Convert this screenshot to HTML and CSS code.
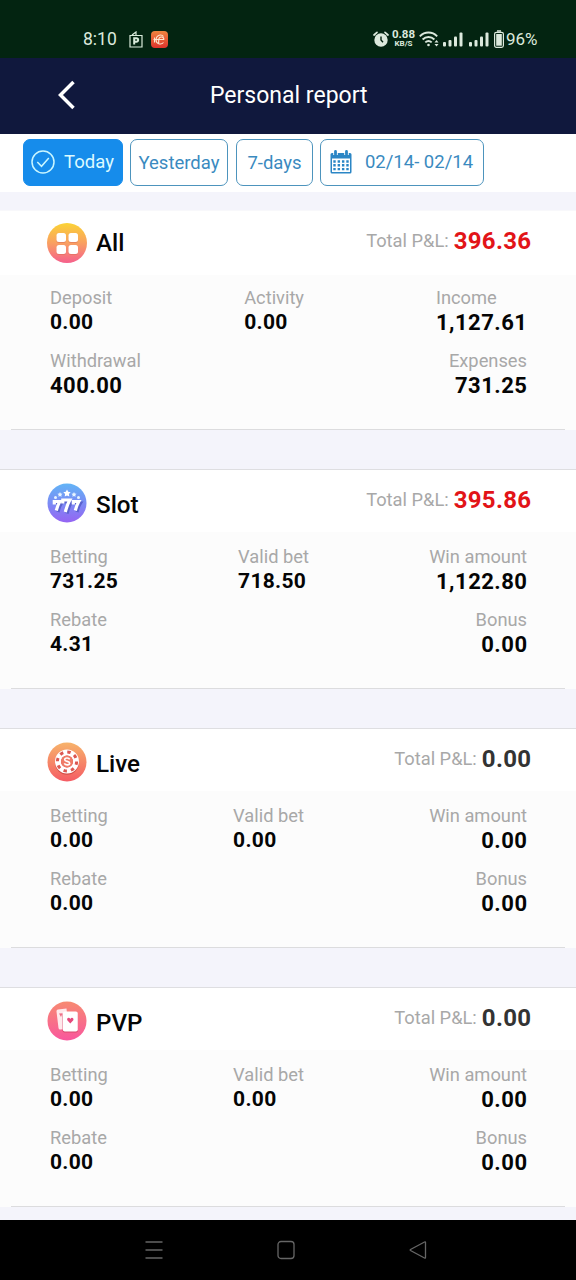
FILE: index.html
```html
<!DOCTYPE html>
<html lang="en">
<head>
<meta charset="utf-8">
<title>Personal report</title>
<link rel="stylesheet" href="styles.css">
</head>
<body>
<div class="status">
  <div class="status-left">
    <span class="clock">8:10</span>
    <svg class="ico-p" width="14" height="17" viewBox="0 0 14 17" fill="none" stroke="#d9eadb" stroke-width="1.2"><path d="M1 4.500h12v11.500H1zM3 4l4-3v3"/><path d="M5.200 13.500V7.200h2.200a1.700 1.700 0 0 1 0 3.500H5.500" stroke-width="2"/></svg>
    <svg width="17" height="17" viewBox="0 0 17 17"><defs><linearGradient id="app" x2="0" y2="1"><stop stop-color="#f0853f"/><stop offset="1" stop-color="#e0322c"/></linearGradient></defs><rect width="17" height="17" rx="4" fill="url(#app)"/><path d="M12.500 5.500C10.500 2.800 5.500 4 5 8.500c-.2 4.500 5 5.700 7.500 3M2.500 8.500h10.300c.5-3-4.600-3.500-5.100 0V12M3.500 6.500v5" fill="none" stroke="#ffe6cf" stroke-width="1.100"/></svg>
  </div>
  <div class="status-right">
    <svg width="16" height="17" viewBox="0 0 16 17"><circle cx="8" cy="9" r="6.700" fill="#dce9dd"/><path d="M1 4l3-2.700M15 4l-3-2.700" stroke="#dce9dd" stroke-width="1.700" stroke-linecap="round"/><path d="M8 5.500V9l2 2.200" stroke="#03200f" stroke-width="1.400" fill="none"/></svg>
    <div class="speed"><span class="speed-num">0.88</span><span class="speed-unit">KB/S</span></div>
    <svg class="wifi" width="20" height="16" viewBox="0 0 20 16" fill="none" stroke="#dce9dd" stroke-width="1.900"><path d="M.8 5.300c5-5 12.400-5 17.400 0M3.600 8.500c3.400-3.400 8.400-3.400 11.800 0M6.300 11.400c2-1.900 4.400-1.900 6.400 0"/><circle cx="9.500" cy="14" r="1.300" fill="#dce9dd" stroke="none"/><path d="M15.500 11.500l2-2.500 2 2.500zM15.500 13l2 2.500 2-2.500z" fill="#dce9dd" stroke="none"/></svg>
    <svg class="bars" width="20" height="15" viewBox="0 0 20 15" fill="#dce9dd"><rect y="10" width="3" height="4.500" rx="1"/><rect x="5.500" y="8" width="3" height="6.500" rx="1"/><rect x="11" y="4.500" width="3" height="10" rx="1"/><rect x="16.500" y=".5" width="3" height="14" rx="1"/></svg>
    <svg class="bars" width="20" height="15" viewBox="0 0 20 15" fill="#dce9dd"><rect y="10" width="3" height="4.500" rx="1"/><rect x="5.500" y="8" width="3" height="6.500" rx="1"/><rect x="11" y="4.500" width="3" height="10" rx="1"/><rect x="16.500" y=".5" width="3" height="14" rx="1"/></svg>
    <svg class="battery" width="10" height="18" viewBox="0 0 10 18"><path d="M3 1h4" stroke="#dce9dd" stroke-width="1.500"/><rect x=".6" y="2.300" width="8.800" height="15" rx="1.800" fill="none" stroke="#dce9dd" stroke-width="1.200"/><rect x="2.200" y="4" width="5.600" height="11.700" fill="#dce9dd"/></svg>
    <span class="percent">96%</span>
  </div>
</div>

<header class="header">
  <svg class="back" width="20" height="32" viewBox="0 0 20 32"><path d="M16.500 3L3.500 16l13 13" fill="none" stroke="#fff" stroke-width="3.500"/></svg>
  <h1 class="title">Personal report</h1>
</header>

<nav class="filters">
  <button class="chip chip-today"><svg width="24" height="24" viewBox="0 0 24 24" fill="none" stroke="#c9f6ff" stroke-width="1.500"><circle cx="12" cy="12" r="11"/><path d="M6.300 12l4.200 4.300 7.300-8.300"/></svg><span>Today</span></button>
  <button class="chip chip-yesterday">Yesterday</button>
  <button class="chip chip-week">7-days</button>
  <button class="chip chip-range"><svg width="22" height="24" viewBox="0 0 22 24"><path d="M2 3h18a1.500 1.500 0 0 1 1.500 1.500V22a1.500 1.500 0 0 1-1.500 1.500H2A1.500 1.500 0 0 1 .5 22V4.500A1.500 1.500 0 0 1 2 3z" fill="#2b86c5"/><path d="M2 8.500h18V22H2z" fill="#fff"/><path d="M3.300 11.500h15.400M3.300 15.300h15.400M3.300 19.100h15.400" stroke="#2b86c5" stroke-width="2.400" stroke-dasharray="2.400 1.930"/><path d="M5.500 0v5M16.500 0v5" stroke="#fff" stroke-width="4.500"/><path d="M5.500 1.500v3M16.500 1.500v3" stroke="#2b86c5" stroke-width="2.800" stroke-linecap="round"/></svg><span>02/14- 02/14</span></button>
</nav>

<main class="report">
  <section class="card card-first">
    <div class="card-head">
      <svg class="badge" width="40" height="40" viewBox="0 0 40 40"><defs><linearGradient id="gAll" x2="0" y2="1"><stop stop-color="#fbd335"/><stop offset=".5" stop-color="#f9a062"/><stop offset="1" stop-color="#f5608c"/></linearGradient></defs><circle cx="20" cy="20" r="20" fill="url(#gAll)"/><g fill="#d96a5a" opacity=".5"><rect x="9.500" y="11" width="9.500" height="9" rx="2.500"/><rect x="21.500" y="11" width="9.500" height="9" rx="2.500"/><rect x="9.500" y="23" width="9.500" height="9" rx="2.500"/><rect x="21.500" y="23" width="9.500" height="9" rx="2.500"/></g><g fill="#fff"><rect x="9.500" y="10" width="9.500" height="9" rx="2.500"/><rect x="21.500" y="10" width="9.500" height="9" rx="2.500"/><rect x="9.500" y="22" width="9.500" height="9" rx="2.500"/><rect x="21.500" y="22" width="9.500" height="9" rx="2.500"/></g></svg>
      <h2 class="name">All</h2>
      <div class="sum"><span class="total-label">Total P&amp;L:</span><span class="total red">396.36</span></div>
    </div>
    <div class="card-body">
      <div class="row">
        <div class="cell"><span class="label">Deposit</span><span class="value">0.00</span></div>
        <div class="cell"><span class="label">Activity</span><span class="value">0.00</span></div>
        <div class="cell cell-last cell-start"><span class="label">Income</span><span class="value">1,127.61</span></div>
      </div>
      <div class="row">
        <div class="cell"><span class="label">Withdrawal</span><span class="value value-large">400.00</span></div>
        <div class="cell cell-last"><span class="label">Expenses</span><span class="value">731.25</span></div>
      </div>
    </div>
  </section>

  <section class="card">
    <div class="card-head">
      <svg class="badge" width="40" height="40" viewBox="0 0 40 40"><defs><linearGradient id="gSlot" x2="0" y2="1"><stop stop-color="#62b4f6"/><stop offset="1" stop-color="#9564f3"/></linearGradient></defs><circle cx="20" cy="20" r="19.500" fill="url(#gSlot)"/><g fill="none" stroke="#5b62ce" stroke-width="3.200"><path d="M8.500 20h6q-2 3-3.500 9M17 19h7.500q-2.500 4-4.500 11.500M27.500 20h6q-2 3-3.500 9"/></g><g fill="none" stroke="#fff" stroke-width="3.200"><path d="M7.300 21.500v-3h5.500q-2 3.500-3.500 9M15.800 20.500v-3.500h7q-2.500 4.500-4.500 12M26.300 21.500v-3h5.500q-2 3.500-3.500 9"/></g><path d="M20 6.500l1.200 2.300 2.500.4-1.800 1.800.4 2.500-2.300-1.100-2.300 1.100.4-2.500-1.800-1.800 2.500-.4z" fill="#fff"/><g fill="#e8f5ff"><path d="M13 9l.8 1.500 1.700.3-1.200 1.200.3 1.700-1.600-.8-1.600.8.300-1.700-1.200-1.200 1.700-.3zM27 9l.8 1.500 1.700.3-1.200 1.200.3 1.700-1.600-.8-1.600.8.300-1.700-1.200-1.200 1.700-.3z"/><circle cx="8.500" cy="14.500" r="1.500"/><circle cx="31.500" cy="14.500" r="1.500"/></g></svg>
      <h2 class="name">Slot</h2>
      <div class="sum"><span class="total-label">Total P&amp;L:</span><span class="total red">395.86</span></div>
    </div>
    <div class="card-body">
      <div class="row">
        <div class="cell"><span class="label">Betting</span><span class="value">731.25</span></div>
        <div class="cell"><span class="label">Valid bet</span><span class="value">718.50</span></div>
        <div class="cell cell-last"><span class="label">Win amount</span><span class="value">1,122.80</span></div>
      </div>
      <div class="row">
        <div class="cell"><span class="label">Rebate</span><span class="value">4.31</span></div>
        <div class="cell cell-last"><span class="label">Bonus</span><span class="value">0.00</span></div>
      </div>
    </div>
  </section>

  <section class="card">
    <div class="card-head">
      <svg class="badge" width="40" height="40" viewBox="0 0 40 40"><defs><linearGradient id="gLive" x2="0" y2="1"><stop stop-color="#f7b36b"/><stop offset="1" stop-color="#f55c64"/></linearGradient></defs><circle cx="20" cy="20" r="19.500" fill="url(#gLive)"/><circle cx="20" cy="20.800" r="12" fill="#d5504a"/><circle cx="20" cy="19.500" r="9" fill="none" stroke="#fff" stroke-width="6"/><circle cx="20" cy="19.500" r="9.600" fill="none" stroke="#dc5650" stroke-width="3" stroke-dasharray="3.400 4.140"/><circle cx="20" cy="19.500" r="6" fill="#ef7b67"/><path d="M22.700 17.300c-1-1.900-5-1.700-5 .4 0 2.300 5 1.100 5 3.500 0 2.100-4.300 2.200-5.400.2" fill="none" stroke="#fff" stroke-width="1.600"/></svg>
      <h2 class="name">Live</h2>
      <div class="sum"><span class="total-label">Total P&amp;L:</span><span class="total">0.00</span></div>
    </div>
    <div class="card-body">
      <div class="row">
        <div class="cell"><span class="label">Betting</span><span class="value">0.00</span></div>
        <div class="cell"><span class="label">Valid bet</span><span class="value">0.00</span></div>
        <div class="cell cell-last"><span class="label">Win amount</span><span class="value">0.00</span></div>
      </div>
      <div class="row">
        <div class="cell"><span class="label">Rebate</span><span class="value">0.00</span></div>
        <div class="cell cell-last"><span class="label">Bonus</span><span class="value">0.00</span></div>
      </div>
    </div>
  </section>

  <section class="card">
    <div class="card-head">
      <svg class="badge" width="40" height="40" viewBox="0 0 40 40"><defs><linearGradient id="gPvp" x2="0" y2="1"><stop stop-color="#f78a72"/><stop offset="1" stop-color="#f9579d"/></linearGradient></defs><circle cx="20" cy="20" r="19.500" fill="url(#gPvp)"/><path d="M9.500 10.500q-.2-1.800 1.500-2l8.500-1 2 20-8 1q-1.800.2-2-1.500z" fill="#ffe9ec"/><path d="M12 12.500l2 3.500 1.700-3.800z" fill="#ef6f86"/><rect x="15.500" y="11.500" width="15.500" height="20" rx="2" fill="#d9486f"/><rect x="15.800" y="10.500" width="15" height="20" rx="2" fill="#fff"/><path d="M23.300 22.500l-3-3.200c-1-2.500 2-3.300 3-1.300 1-2 4-1.200 3 1.300z" fill="#e5497c"/></svg>
      <h2 class="name">PVP</h2>
      <div class="sum"><span class="total-label">Total P&amp;L:</span><span class="total">0.00</span></div>
    </div>
    <div class="card-body">
      <div class="row">
        <div class="cell"><span class="label">Betting</span><span class="value">0.00</span></div>
        <div class="cell"><span class="label">Valid bet</span><span class="value">0.00</span></div>
        <div class="cell cell-last"><span class="label">Win amount</span><span class="value">0.00</span></div>
      </div>
      <div class="row">
        <div class="cell"><span class="label">Rebate</span><span class="value">0.00</span></div>
        <div class="cell cell-last"><span class="label">Bonus</span><span class="value">0.00</span></div>
      </div>
    </div>
  </section>
</main>

<footer class="navbar">
  <svg width="18" height="20" viewBox="0 0 18 20" fill="none" stroke="#666" stroke-width="1.400"><path d="M.5 2h17M.5 10h17M.5 18h17"/></svg>
  <svg width="18" height="20" viewBox="0 0 18 20" fill="none" stroke="#666" stroke-width="1.300"><rect x="1" y="1.500" width="16" height="17" rx="3"/></svg>
  <svg width="18" height="20" viewBox="0 0 18 20" fill="none" stroke="#666" stroke-width="1.300"><path d="M16.500 2.500v15q0 1-1 .5L1.500 10.500q-.7-.5 0-1L15.500 2q1-.5 1 .5z"/></svg>
</footer>
</body>
</html>
```
FILE: styles.css
```css
* { box-sizing: border-box; }

body {
  margin: 0;
  width: 576px;
  height: 1280px;
  overflow: hidden;
  display: flex;
  flex-direction: column;
  background: #f4f4fb;
  font-family: Roboto, "Liberation Sans", sans-serif;
  color: #050505;
}

svg { display: block; flex: none; }

.status {
  height: 58px;
  flex: none;
  padding: 20px 38px 0 83px;
  display: flex;
  justify-content: space-between;
  align-items: center;
  background: #032411;
  color: #dce9dd;
}

.status-left, .status-right { display: flex; align-items: center; }
.clock { width: 34px; font-size: 17.5px; white-space: nowrap; }
.status-left .ico-p { margin: 0 8px 0 12px; }
.speed { width: 23px; margin: 0 4px 0 3px; display: flex; flex-direction: column; align-items: center; font-weight: 700; line-height: 9px; }
.speed-num { font-size: 11.5px; }
.speed-unit { font-size: 8px; }
.wifi { margin-right: 4px; }
.bars { margin-right: 6px; }
.battery { margin-right: 2px; margin-left: -1px; }
.percent { font-size: 17px; width: 32px; white-space: nowrap; }

.header {
  height: 76px;
  flex: none;
  display: flex;
  align-items: center;
  padding-left: 57px;
  background: #10183d;
  color: #fff;
}
.back { margin-bottom: 2px; }
.title { margin: 0 0 0 133px; font-size: 23px; font-weight: 400; line-height: 30px; }

.filters {
  height: 58px;
  flex: none;
  display: flex;
  align-items: flex-start;
  padding: 5px 0 0 23px;
  background: #fff;
}
.chip {
  height: 47px;
  padding: 0;
  display: flex;
  align-items: center;
  justify-content: center;
  border: 1px solid #4d94bd;
  border-radius: 7px;
  background: #fff;
  color: #3a8abf;
  font: 400 18.5px Roboto, sans-serif;
  white-space: nowrap;
}
.chip-today { width: 100px; margin-right: 7px; padding: 0 1px 2px 0; gap: 9px; background: #168ceb; border-color: #168ceb; color: #dcfaff; }
.chip-yesterday { width: 98px; margin-right: 8px; }
.chip-week { width: 77px; margin-right: 7px; }
.chip-range { width: 164px; padding: 0 1px 2px 0; gap: 13px; }

.report { flex: 1; min-height: 0; padding-top: 18px; }

.card {
  height: 220px;
  margin-bottom: 39px;
  display: flex;
  flex-direction: column;
  border-top: 1px solid #dedee1;
  background: #fcfcfc;
}
.card-head {
  height: 62px;
  flex: none;
  display: flex;
  align-items: center;
  padding: 4px 45px 0 47px;
  background: #fff;
}
.name { margin: 0 auto 0 9px; padding-top: 3px; font-size: 24.2px; font-weight: 500; line-height: 30px; }
.sum { display: flex; align-items: center; margin-bottom: 7px; }
.total-label { font-size: 18.3px; color: #a8a8a8; margin-right: 5px; }
.total { font-size: 24px; font-weight: 700; letter-spacing: 0.3px; margin-right: -0.3px; color: #333; }
.red { color: #e21418; }

.card-first { border-top-color: #f8f8fb; }
.card-first .card-head { height: 64px; padding-top: 0; }
.card-first .name { padding-top: 0; }
.card-first .sum { margin-bottom: 5px; }

.card-body {
  flex: 1;
  margin: 0 11px;
  padding: 13px 38px 0 39px;
  border-bottom: 1px solid #dcdcde;
}
.card-first .card-body { padding-top: 11px; }
.row { height: 63px; display: flex; justify-content: space-between; }
.cell { display: flex; flex-direction: column; align-items: flex-start; }
.cell-last { align-items: flex-end; }
.cell-start { align-items: flex-start; }
.label { font-size: 18.3px; line-height: 24px; color: #a8a8a8; }
.value { font-size: 21px; font-weight: 700; line-height: 24px; letter-spacing: 0.3px; margin-right: -0.3px; }
.cell-last .value, .value-large { font-size: 22px; line-height: 26px; letter-spacing: 0.5px; margin-right: -0.5px; }

.navbar {
  height: 60px;
  flex: none;
  display: flex;
  justify-content: center;
  align-items: center;
  gap: 114px;
  padding-right: 4px;
  background: #000;
}
```
